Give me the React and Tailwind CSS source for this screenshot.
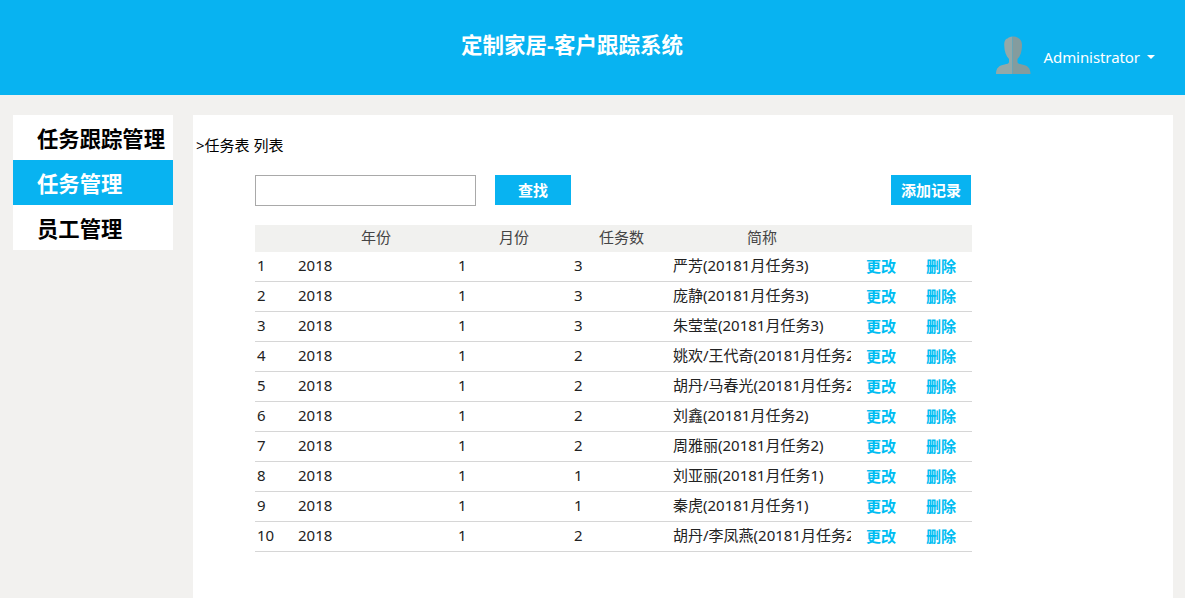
import { useState } from "react";

const MENU = ["任务跟踪管理", "任务管理", "员工管理"];

const TASKS = [
    { id: 1, year: 2018, month: 1, count: 3, name: "严芳(20181月任务3)" },
    { id: 2, year: 2018, month: 1, count: 3, name: "庞静(20181月任务3)" },
    { id: 3, year: 2018, month: 1, count: 3, name: "朱莹莹(20181月任务3)" },
    { id: 4, year: 2018, month: 1, count: 2, name: "姚欢/王代奇(20181月任务2)" },
    { id: 5, year: 2018, month: 1, count: 2, name: "胡丹/马春光(20181月任务2)" },
    { id: 6, year: 2018, month: 1, count: 2, name: "刘鑫(20181月任务2)" },
    { id: 7, year: 2018, month: 1, count: 2, name: "周雅丽(20181月任务2)" },
    { id: 8, year: 2018, month: 1, count: 1, name: "刘亚丽(20181月任务1)" },
    { id: 9, year: 2018, month: 1, count: 1, name: "秦虎(20181月任务1)" },
    { id: 10, year: 2018, month: 1, count: 2, name: "胡丹/李凤燕(20181月任务2)" },
];

function Avatar() {
    return (
        <svg className="w-[36px] h-[40px] shrink-0" viewBox="0 0 36 40">
            <path
                d="M17.500 1.500C15 1.500 13.500 2.500 12.500 3.500 10 4 9 7 9.300 11c0 5 1.700 10 4.700 13v3c0 1.500-2 2-4.500 2.500C4 30.500 1 33 1 39h16.500z"
                fill="#93a9a9"
            />
            <path
                d="M17.500 1.500C24 1.500 27 5 27 10c0 6-1.500 11-4.500 14v3c0 1.500 2 2 4.500 2.500 5.500 1 8.500 3.500 8.500 9.500h-18z"
                fill="#849c9e"
            />
        </svg>
    );
}

function Header() {
    return (
        <header className="relative h-[95px] bg-[#08b3f1] text-white">
            <h1 className="pt-[29px] pr-[41px] text-center text-[21.5px] leading-8 font-bold">
                定制家居-客户跟踪系统
            </h1>
            <div className="absolute right-[30px] top-[35px] flex items-start">
                <Avatar />
                <span className="ml-3 mt-[10px] text-[15px] leading-6 tracking-[-0.07px]">Administrator</span>
                <span className="ml-[7px] mt-5 border-x-4 border-t-4 border-x-transparent border-t-white" />
            </div>
        </header>
    );
}

export default function App() {
    const [active, setActive] = useState("任务管理");
    const [keyword, setKeyword] = useState("");

    return (
        <div className="h-screen overflow-hidden bg-[#f2f1ef] font-['Noto_Sans','Noto_Sans_CJK_SC',sans-serif] text-[15px] text-[#222]">
            <Header />
            <div className="flex h-[503px] gap-5 pt-5 pl-[13px] pr-3">
                <nav className="w-40 shrink-0">
                    {MENU.map((item) => (
                        <button
                            key={item}
                            type="button"
                            onClick={() => setActive(item)}
                            className={`block h-[45px] w-full whitespace-nowrap pt-0.5 pl-6 text-left text-[21.33px] font-bold ${
                                item === active ? "bg-[#08b3f1] text-white" : "bg-white text-black"
                            }`}
                        >
                            {item}
                        </button>
                    ))}
                </nav>

                <main className="flex-1 bg-white pt-5">
                    <p className="h-5 pl-[3px] leading-5 text-black">&gt;任务表 列表</p>

                    <div className="ml-[62px] mt-5 flex w-[716px] items-start">
                        <input
                            className="h-[31px] w-[221px] border border-[#a9a9a9] px-2 outline-none"
                            value={keyword}
                            onChange={(e) => setKeyword(e.target.value)}
                        />
                        <button type="button" className="ml-[19px] h-[30px] w-[76px] bg-[#08b3f1] font-bold text-white">
                            查找
                        </button>
                        <button type="button" className="ml-auto h-[30px] w-20 bg-[#08b3f1] font-bold text-white">
                            添加记录
                        </button>
                    </div>

                    <table className="ml-[62px] mt-[19px] w-[717px] table-fixed border-collapse">
                        <colgroup>
                            <col className="w-[41px]" />
                            <col className="w-[160px]" />
                            <col className="w-[116px]" />
                            <col className="w-[99px]" />
                            <col className="w-[182px]" />
                            <col className="w-[119px]" />
                        </colgroup>
                        <thead>
                            <tr className="h-[27px] bg-[#f1f1ef] align-top leading-[25px] text-[#444]">
                                <th className="p-0" />
                                <th className="p-0 font-normal">年份</th>
                                <th className="p-0 font-normal">月份</th>
                                <th className="p-0 font-normal">任务数</th>
                                <th className="p-0 font-normal">简称</th>
                                <th className="p-0" />
                            </tr>
                        </thead>
                        <tbody>
                            {TASKS.map((task) => (
                                <tr key={task.id} className="h-[30px] align-top leading-[26px] shadow-[inset_0_-1px_0_#d6d6d6]">
                                    <td className="p-0 pl-0.5">{task.id}</td>
                                    <td className="p-0 pl-0.5">{task.year}</td>
                                    <td className="p-0 pl-0.5">{task.month}</td>
                                    <td className="p-0 pl-0.5">{task.count}</td>
                                    <td className="p-0 pl-0.5 pr-0.5">
                                        <div className="overflow-hidden whitespace-nowrap">{task.name}</div>
                                    </td>
                                    <td className="p-0 pl-[13px]">
                                        <div className="flex gap-[30px] pt-px font-bold text-[#00bdf2]">
                                            <a href="#">更改</a>
                                            <a href="#">删除</a>
                                        </div>
                                    </td>
                                </tr>
                            ))}
                        </tbody>
                    </table>
                </main>
            </div>
        </div>
    );
}
